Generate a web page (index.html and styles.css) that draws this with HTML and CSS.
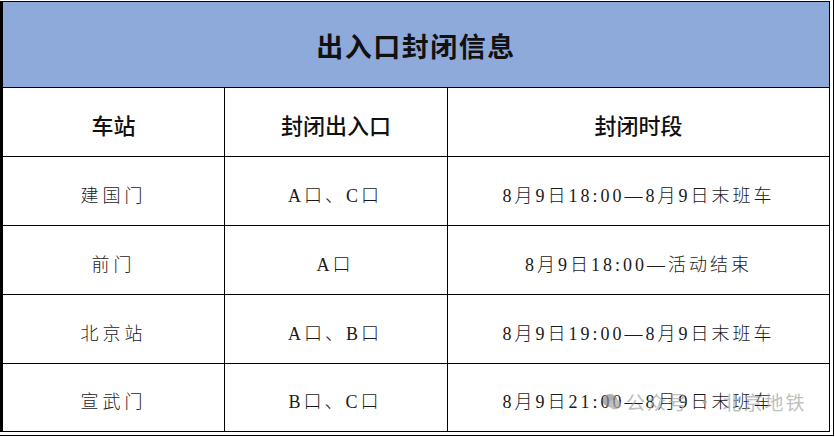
FILE: index.html
```html
<!DOCTYPE html>
<html lang="zh-CN">
<head>
<meta charset="utf-8">
<title>出入口封闭信息</title>
<link rel="stylesheet" href="styles.css">
</head>
<body>
<div class="frame">
  <div class="sheet">
    <div class="cell title">出入口封闭信息</div>
    <div class="cell head">车站</div>
    <div class="cell head">封闭出入口</div>
    <div class="cell head">封闭时段</div>

    <div class="cell body station">建国门</div>
    <div class="cell body gate">A口、C口</div>
    <div class="cell body time">8月9日18:00—8月9日末班车</div>

    <div class="cell body station">前门</div>
    <div class="cell body gate">A口</div>
    <div class="cell body time">8月9日18:00—活动结束</div>

    <div class="cell body station">北京站</div>
    <div class="cell body gate">A口、B口</div>
    <div class="cell body time">8月9日19:00—8月9日末班车</div>

    <div class="cell body station">宣武门</div>
    <div class="cell body gate">B口、C口</div>
    <div class="cell body time">8月9日21:00—8月9日末班车</div>
  </div>
</div>
<div class="watermark">
  <svg class="wm-icon" width="20" height="20" viewBox="0 0 20 20" aria-hidden="true">
    <ellipse cx="8" cy="8.5" rx="7.5" ry="6.5" fill="#8c8c8c"/>
    <ellipse cx="13" cy="12.5" rx="6" ry="5" fill="#a8a8a8"/>
  </svg>
  <span class="wm-text">公众号 · 北京地铁</span>
</div>
</body>
</html>
```

FILE: styles.css
```css
html, body {
  margin: 0;
  padding: 0;
  background: #ffffff;
}

.frame {
  box-sizing: border-box;
  width: 834px;
  height: 436px;
  padding: 1px 3px 3px 0;
  border-right: 1px solid #000;
  border-bottom: 1px solid #000;
}

.sheet {
  display: grid;
  grid-template-columns: 221px 222px 381px;
  grid-template-rows: 85px 68px 68px 68px 68px 67px;
  gap: 1px;
  padding: 1px 1px 1px 3px;
  width: 830px;
  box-sizing: border-box;
  background: #000;
}

.cell {
  background: #fff;
  display: flex;
  align-items: center;
  justify-content: center;
  color: #111;
  white-space: nowrap;
  box-sizing: border-box;
}

.title {
  grid-column: 1 / 4;
  background: #8eaadb;
  font-family: "Noto Sans CJK SC", sans-serif;
  font-weight: 700;
  font-size: 27px;
  letter-spacing: 1.5px;
  padding-top: 2px;
}

.head {
  font-family: "Noto Sans CJK SC", sans-serif;
  font-weight: 500;
  font-size: 22px;
  padding-top: 4px;
}

.body {
  font-family: "Liberation Serif", "Noto Sans CJK SC", serif;
  font-weight: 300;
  font-size: 18px;
  color: #1a1a1a;
  padding-top: 5px;
}

.station {
  letter-spacing: 4px;
}

.gate {
  letter-spacing: 3px;
  padding-right: 2px;
}

.time {
  letter-spacing: 3px;
}

.watermark {
  position: absolute;
  left: 602px;
  top: 388px;
  display: flex;
  align-items: center;
  gap: 4px;
  opacity: 0.7;
}

.wm-text {
  font-family: "Noto Sans CJK SC", sans-serif;
  font-size: 19px;
  letter-spacing: 2px;
  color: #a6a6a6;
}
```
